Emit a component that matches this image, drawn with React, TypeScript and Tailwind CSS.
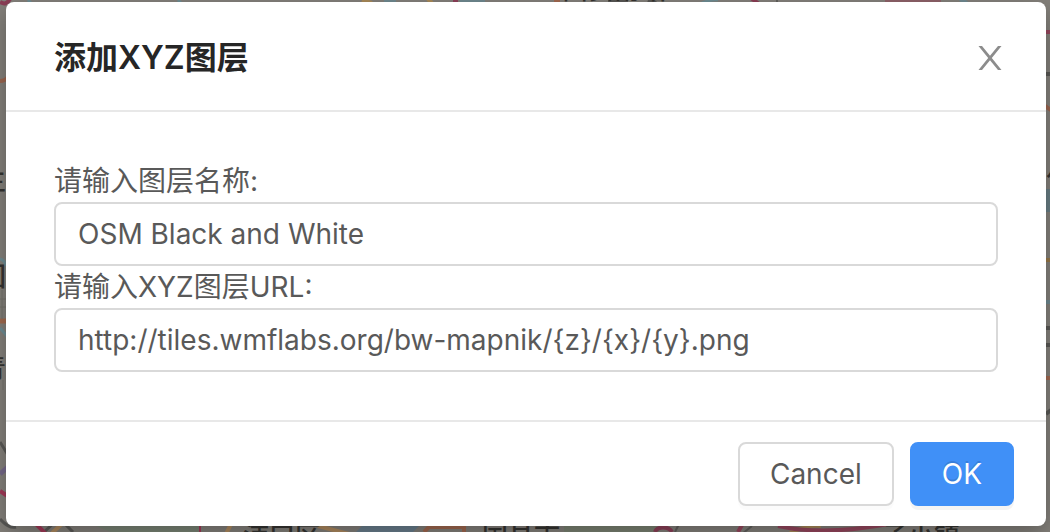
import { useState } from 'react';

function MapBackdrop() {
  return (
    <svg
      aria-hidden="true"
      className="absolute inset-0 h-full w-full"
      viewBox="0 0 1050 532"
      preserveAspectRatio="none"
      fill="none"
    >
      <rect width="1050" height="532" fill="#84817b" />
      <g strokeWidth="3">
        <path d="M0 2q6 4 10-3M751-2l8 6" stroke="#8b3e55" strokeWidth="4" />
        <path d="M0 81q5 0 8-4M1045 106l6 4" stroke="#9c6650" strokeWidth="4" />
        <path d="M0 321h8" stroke="#a26b4f" strokeWidth="5" />
        <path d="M0 259q5 1 6 7M0 328l7 8M28 0l3 3M178 0l3 3M702 3q10-4 16-3" stroke="#6e8d94" />
        <path d="M0 442l8 13M0 519q9 10 16 8M44 532l12-11M73 532l-10-10" stroke="#5b5a57" />
        <path d="M0 474l9-8" stroke="#756989" strokeWidth="5" />
        <path d="M0 491l9 6M36 524l10 10M199 524v8" stroke="#a23a58" strokeWidth="4" />
        <path d="M52 533l12-11M231 524l-5 10M318 526l35 9" stroke="#b08b60" strokeWidth="4" />
        <path d="M0 299h7M0 307h7M2 290v29M3 380v10" stroke="#75726d" strokeWidth="1" />
      </g>
      <path d="M96 526h103v6h-88z" fill="#7a8576" />
      <path d="M362 526h57l-6 6h-57z" fill="#6a7f8e" />
      <path d="M564 526h95v6h-95z" fill="#7b8373" />
      <path d="M885 0h56v3h-56z" fill="#8e6269" />
      <path d="M1046 189h4v23h-4z" fill="#687d84" />
      <g strokeWidth="4">
        <path d="M362 0l10 3M428-1l4 4M790 533q18-9 31-7" stroke="#a98a59" />
        <path d="M453 0h5M655 532c2-6 14-6 17 0" stroke="#8d4059" />
        <path d="M738 532l4-7M778 526q46 10 110-2M1046 32h4" stroke="#97475e" />
        <path d="M424 532l5-5h35v5M554 0h6M1046 378h4" stroke="#a26950" />
        <path d="M384 1h12M460 1h25M960-1l7 4M1046 302h4" stroke="#6f8990" />
        <path d="M1046 260h4" stroke="#967849" />
        <path d="M608 1h20M648 0l8 3M1046 328h4M1046 345h4M1046 414l5-4M1046 74h4" stroke="#595855" />
        <path d="M742 534l10-8M675 532l4-8M777 0v3" stroke="#62605d" strokeWidth="2" />
      </g>
      <g className="fill-[#353431] font-['Noto_Sans_CJK_SC',sans-serif] text-[26px] font-medium">
        <text x="243" y="545">浦口区</text>
        <text x="482" y="545">国昌市</text>
        <text x="882" y="545">子小镇</text>
        <text x="562" y="-1">西安南站</text>
        <text x="-20" y="286">回</text>
        <text x="-20" y="378">青</text>
        <text x="-20" y="190">主</text>
        <text x="1046" y="176">八</text>
      </g>
    </svg>
  );
}

function TextField({
  id,
  label,
  value,
  onChange,
}: {
  id: string;
  label: string;
  value: string;
  onChange: (value: string) => void;
}) {
  return (
    <div className="flex flex-col">
      <label htmlFor={id} className="leading-[42px]">
        {label}
      </label>
      <input
        id={id}
        type="text"
        value={value}
        onChange={(event) => onChange(event.target.value)}
        className="h-16 w-full rounded-lg border-2 border-[#d9d9d9] bg-white px-[22px] outline-none focus:border-[#4090f7]"
      />
    </div>
  );
}

export default function App() {
  const [name, setName] = useState('OSM Black and White');
  const [url, setUrl] = useState('http://tiles.wmflabs.org/bw-mapnik/{z}/{x}/{y}.png');

  return (
    <div className="relative min-h-screen overflow-hidden bg-[#84817b] pt-0.5 pr-1 pb-1.5 pl-1.5 font-[Inter,'Noto_Sans_CJK_SC',sans-serif] text-[28px] text-[#595959]">
      <MapBackdrop />
      <div
        role="dialog"
        aria-modal="true"
        aria-labelledby="dialog-title"
        className="relative rounded-lg bg-white shadow-[0_8px_24px_rgba(0,0,0,0.3)]"
      >
        <header className="flex items-center justify-between border-b-2 border-[#e8e8e8] pt-[34px] pr-11 pb-[30px] pl-12">
          <h1 id="dialog-title" className="text-[32px] leading-[44px] font-semibold text-[#262626]">
            添加XYZ图层
          </h1>
          <button type="button" aria-label="Close" className="text-[#8c8c8c]">
            <svg className="h-6 w-6" viewBox="0 0 24 24" fill="currentColor" aria-hidden="true">
              <path d="M.5 0h3.500L12 9.700 20 0h3.500L13.800 12l9.700 12H20l-8-9.700L4 24H.5l9.700-12z" />
            </svg>
          </button>
        </header>

        <div className="p-12">
          <TextField id="layer-name" label="请输入图层名称:" value={name} onChange={setName} />
          <TextField id="layer-url" label="请输入XYZ图层URL:" value={url} onChange={setUrl} />
        </div>

        <footer className="flex justify-end gap-4 border-t-2 border-[#e8e8e8] px-8 py-5">
          <button
            type="button"
            className="h-16 rounded-lg border-2 border-[#d9d9d9] bg-white px-[30px] shadow-[0_4px_0_rgba(0,0,0,0.015)]"
          >
            Cancel
          </button>
          <button
            type="button"
            className="h-16 rounded-lg border-2 border-[#4090f7] bg-[#4090f7] px-[30px] text-white shadow-[0_4px_0_rgba(0,0,0,0.045)] text-shadow-[0_-2px_0_rgba(0,0,0,0.12)]"
          >
            OK
          </button>
        </footer>
      </div>
    </div>
  );
}
